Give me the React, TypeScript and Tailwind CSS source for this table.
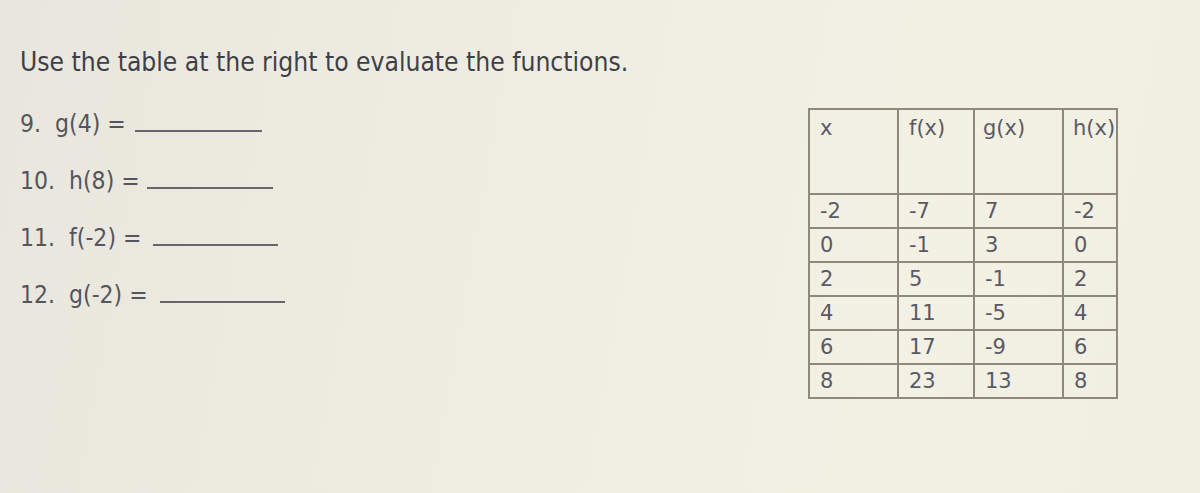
import React from "react";

const rows = [
  ["-2", "-7", "7", "-2"],
  ["0", "-1", "3", "0"],
  ["2", "5", "-1", "2"],
  ["4", "11", "-5", "4"],
  ["6", "17", "-9", "6"],
  ["8", "23", "13", "8"],
];

const questions = [
  { num: "9.", expr: "g(4) =", line: "ml-[9px] w-[127px]" },
  { num: "10.", expr: "h(8) =", line: "ml-[7px] w-[126px]" },
  { num: "11.", expr: "f(-2) =", line: "ml-[12px] w-[125px]" },
  { num: "12.", expr: "g(-2) =", line: "ml-[12px] w-[125px]" },
];

export default function App() {
  return (
    <div className="w-[1200px] h-[493px] overflow-hidden bg-[linear-gradient(100deg,#e9e6dd_0%,#efece2_40%,#f3f0e4_75%,#f1eee2_100%)] flex">
      {/* Left: instructions and questions */}
      <div
        className="w-[808px] pl-[20px] pt-[44px] text-[#4f4f58]"
        style={{ fontFamily: '"Comic Sans MS", "DejaVu Sans Condensed", "DejaVu Sans", sans-serif' }}
      >
        <p className="text-[26.2px] leading-[36px] text-[#3f3f47]">
          Use the table at the right to evaluate the functions.
        </p>
        <div className="mt-[27px] flex flex-col gap-[23px]">
          {questions.map((q) => (
            <div key={q.num} className="h-[34px] text-[24.5px] leading-[34px] text-[#55555e] whitespace-nowrap">
              <span>{q.num}</span>
              <span className="ml-[14px]">{q.expr}</span>
              <span className={`inline-block border-b-2 border-[#66666c] ${q.line}`} />
            </div>
          ))}
        </div>
      </div>

      {/* Right: table */}
      <div className="pt-[108px]" style={{ fontFamily: '"DejaVu Sans", Verdana, sans-serif' }}>
        <table className="border-collapse text-[21px] text-[#5a5a66]">
          <thead>
            <tr className="h-[85px]">
              <th className="w-[89px] border-2 border-[#8d8a7c] align-top text-left font-normal pl-[10px] pt-[3px]">x</th>
              <th className="w-[76px] border-2 border-[#8d8a7c] align-top text-left font-normal pl-[10px] pt-[3px]">f(x)</th>
              <th className="w-[89px] border-2 border-[#8d8a7c] align-top text-left font-normal pl-[8px] pt-[3px]">g(x)</th>
              <th className="w-[54px] border-2 border-[#8d8a7c] align-top text-left font-normal pl-[9px] pt-[3px]">h(x)</th>
            </tr>
          </thead>
          <tbody>
            {rows.map((r, i) => (
              <tr key={i} className="h-[34px]">
                {r.map((c, j) => (
                  <td key={j} className="border-2 border-[#8d8a7c] pl-[10px] leading-[28px] align-middle">
                    {c}
                  </td>
                ))}
              </tr>
            ))}
          </tbody>
        </table>
      </div>
    </div>
  );
}
